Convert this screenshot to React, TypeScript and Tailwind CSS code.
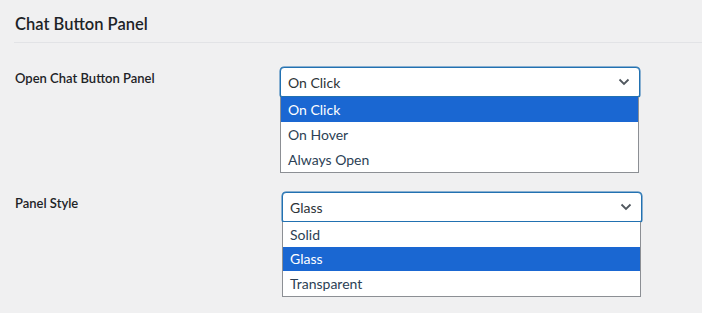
import React from "react";

function Chevron() {
  return (
    <svg width="12" height="8" viewBox="0 0 12 8" className="block">
      <path d="M1.5 1.5 L6 6 L10.5 1.5" fill="none" stroke="#50575e" strokeWidth="1.8" />
    </svg>
  );
}

function OpenSelect({ value, options, selected, rowH }: { value: string; options: string[]; selected: number; rowH: string }) {
  return (
    <div className="w-[360px]">
      <div className="h-[30px] bg-white border border-[#2271b1] rounded-t-[4px] rounded-b-[2px] shadow-[0_0_0_0.5px_#2271b1] flex items-center justify-between pl-[7px] pr-[9px]">
        <span className="text-[14px] text-[#2c3338]">{value}</span>
        <Chevron />
      </div>
      <div className="w-[359px] bg-white border border-t-0 border-[#8c8f94]">
        {options.map((o, i) => (
          <div
            key={o}
            className={
              (i === selected ? "bg-[#1a67d2] text-white " : "text-[#2c3f55] ") +
              rowH +
              " flex items-center pl-[7px] text-[14px]"
            }
          >
            {o}
          </div>
        ))}
      </div>
    </div>
  );
}

export default function App() {
  return (
    <div className="w-[702px] h-[313px] bg-[#f0f0f1] overflow-hidden" style={{ fontFamily: 'Lato, "Noto Sans", sans-serif' }}>
      <div className="pl-[15px] pt-[12px] h-[42px]">
        <h2 className="text-[16.5px] leading-[24px] font-semibold text-[#1d2327]">Chat Button Panel</h2>
      </div>
      <div className="ml-[14px] h-px bg-[#e2e3e6]" />
      <div className="flex mt-[24px]">
        <div className="w-[280px] pl-[15px] pt-[2px] text-[13px] font-semibold text-[#1d2327]">Open Chat Button Panel</div>
        <OpenSelect value="On Click" options={["On Click", "On Hover", "Always Open"]} selected={0} rowH="h-[25px]" />
      </div>
      <div className="flex mt-[19px]">
        <div className="w-[282px] pl-[15px] pt-[2px] text-[13px] font-semibold text-[#1d2327]">Panel Style</div>
        <OpenSelect value="Glass" options={["Solid", "Glass", "Transparent"]} selected={1} rowH="h-[24.5px]" />
      </div>
    </div>
  );
}
